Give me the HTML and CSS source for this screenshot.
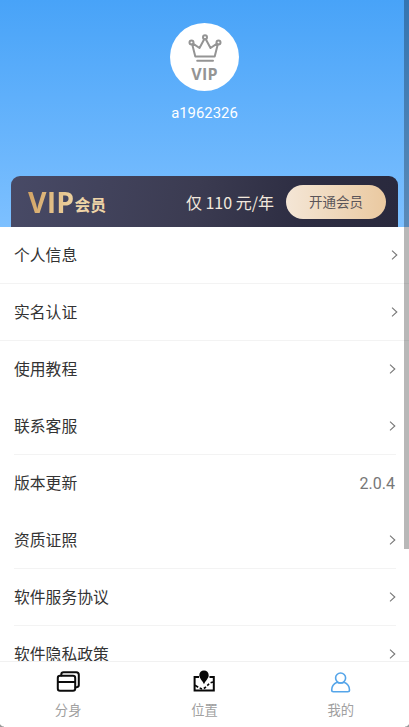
FILE: index.html
```
<!DOCTYPE html>
<html lang="zh-CN">
<head>
<meta charset="utf-8">
<title>我的</title>
<link rel="stylesheet" href="styles.css">
</head>
<body>
<div class="app">
  <main class="content">
    <header class="hero">
      <div class="avatar">
        <svg class="crown" width="34" height="29" viewBox="0 0 34 29" fill="none" stroke="#949494" stroke-width="2" stroke-linejoin="round" stroke-linecap="round">
          <path d="M4.2 10.2 7.3 22.6H26.7L29.8 10.2M5 9.7 11.5 14 16.2 5.2M17.8 5.2 22.5 14 29 9.7M9.2 26.8H25"/>
          <circle cx="17" cy="3.3" r="2"/><circle cx="3.5" cy="8.5" r="2"/><circle cx="30.5" cy="8.5" r="2"/>
        </svg>
        <span class="avatar-label">VIP</span>
      </div>
      <div class="username">a1962326</div>
      <section class="vip-card">
        <div class="vip-title"><span class="vip-word">VIP</span><span class="vip-member">会员</span></div>
        <span class="price">仅 110 元/年</span>
        <button class="join">开通会员</button>
      </section>
    </header>
    <ul class="menu">
      <li class="row wide line"><span class="label">个人信息</span><svg class="chevron" viewBox="0 0 7 10"><path d="M1 .7 5.8 5 1 9.3"/></svg></li>
      <li class="row wide line"><span class="label">实名认证</span><svg class="chevron" viewBox="0 0 7 10"><path d="M1 .7 5.8 5 1 9.3"/></svg></li>
      <li class="row"><span class="label">使用教程</span><svg class="chevron" viewBox="0 0 7 10"><path d="M1 .7 5.8 5 1 9.3"/></svg></li>
      <li class="row line"><span class="label">联系客服</span><svg class="chevron" viewBox="0 0 7 10"><path d="M1 .7 5.8 5 1 9.3"/></svg></li>
      <li class="row"><span class="label">版本更新</span><span class="version">2.0.4</span></li>
      <li class="row line"><span class="label">资质证照</span><svg class="chevron" viewBox="0 0 7 10"><path d="M1 .7 5.8 5 1 9.3"/></svg></li>
      <li class="row line"><span class="label">软件服务协议</span><svg class="chevron" viewBox="0 0 7 10"><path d="M1 .7 5.8 5 1 9.3"/></svg></li>
      <li class="row"><span class="label">软件隐私政策</span><svg class="chevron" viewBox="0 0 7 10"><path d="M1 .7 5.8 5 1 9.3"/></svg></li>
    </ul>
  </main>
  <nav class="tabs">
    <a class="tab">
      <svg width="26" height="24" viewBox="0 0 26 24" fill="none" stroke="#0c0c0c" stroke-width="2" stroke-linejoin="round" stroke-linecap="round">
        <rect x="2.8" y="5.8" width="17.4" height="14.9" rx="2.2"/><path d="M3 12H20M6.3 5.4V4.5Q6.3 2.2 8.6 2.2H21.3Q23.8 2.2 23.8 4.7V15.3Q23.8 17.3 20.6 17.4"/>
      </svg>
      <span>分身</span>
    </a>
    <a class="tab">
      <svg width="26" height="24" viewBox="0 0 26 24" fill="none" stroke="#080808" stroke-width="2">
        <path d="M8 7H3.6V20.6H22.8V7H18.5"/>
        <path d="M4 15.2 7.2 17.2M8.7 18.1 11 18.9M12.8 18.5 15 17M16.3 15.6 18.1 13.8M19.6 12.8 22 12" stroke-width="1.6"/>
        <path d="M13 .6C10.3 .6 8.3 2.6 8.3 5.2 8.3 8.5 11.6 10.6 13 14.2 14.4 10.6 17.7 8.5 17.7 5.2 17.7 2.6 15.7 .6 13 .6Z" fill="#080808" stroke="none"/>
      </svg>
      <span>位置</span>
    </a>
    <a class="tab">
      <svg width="26" height="24" viewBox="0 0 26 24" fill="none" stroke="#55a5e9" stroke-width="1.6" stroke-linejoin="round">
        <circle cx="12.6" cy="8" r="5"/><path d="M9 12.2C5.6 13.7 3.7 16.4 3.7 20Q3.7 21.7 5.4 21.7H19.8Q21.5 21.7 21.5 20C21.5 16.4 19.6 13.7 16.2 12.2M9 12.2Q12.6 13.8 16.2 12.2"/>
      </svg>
      <span>我的</span>
    </a>
  </nav>
  <div class="scrollbar"></div>
  <i class="corner left"></i><i class="corner right"></i>
</div>
</body>
</html>
```
FILE: styles.css
```
* { box-sizing: border-box; }
body {
  margin: 0;
  font-family: Roboto, "Noto Sans CJK SC", sans-serif;
  color: #333;
  background: #fff;
}
.app {
  position: relative;
  display: flex;
  flex-direction: column;
  height: 727px;
  overflow: hidden;
}
.content { flex: 1; min-height: 0; overflow: hidden; }
.hero {
  display: flex;
  flex-direction: column;
  align-items: center;
  height: 227px;
  padding: 23px 11px 0;
  background: linear-gradient(#48a3f8, #7dc0ff);
}
.avatar {
  display: flex;
  flex-direction: column;
  align-items: center;
  width: 69px;
  height: 68px;
  padding-top: 11px;
  border-radius: 50%;
  background: #fff;
}
.crown { flex: none; }
.avatar-label {
  margin-top: 1px;
  font: 700 16px/20px "Open Sans", sans-serif;
  letter-spacing: .2px;
  color: #949494;
}
.username {
  margin-top: 13px;
  font-size: 14.9px;
  line-height: 18px;
  color: #fff;
}
.vip-card {
  display: flex;
  align-items: center;
  align-self: stretch;
  height: 51px;
  margin-top: auto;
  padding: 0 12px 0 17px;
  border-radius: 9px 9px 0 0;
  background: linear-gradient(100deg, #484a66, #3b3b51 48%, #2d2d42 75%, #29293d);
}
.vip-title { display: flex; align-items: flex-start; margin-right: auto; font-weight: 700; line-height: 34px; }
.vip-word {
  font-family: "Open Sans", sans-serif;
  font-size: 28.5px;
  letter-spacing: .2px;
  color: transparent;
  background: linear-gradient(100deg, #d1a262, #f0d6a5);
  background-clip: text;
}
.vip-member { padding-top: 11px; font-size: 15.8px; line-height: 20px; color: #efd4a7; }
.price {
  font: 16px/24px "Noto Sans CJK SC", sans-serif;
  color: #f2e8dd;
}
.join {
  width: 100px;
  height: 34px;
  margin-left: 12px;
  padding: 0 0 1px;
  border: 0;
  border-radius: 17px;
  font: 13.5px/33px "Noto Sans CJK SC", sans-serif;
  color: #5b5559;
  background: linear-gradient(90deg, #f4e6d6, #eac9a0);
}
.menu { margin: 0; padding: 0; list-style: none; }
.row {
  display: flex;
  align-items: center;
  justify-content: space-between;
  height: 57px;
  margin: 0 13px 0 14px;
  border-bottom: 1px solid transparent;
  font-size: 15.8px;
}
.wide { margin: 0; padding: 0 11px 0 14px; }
.line { border-bottom-color: #f3f3f3; }
.label { line-height: 24px; padding-top: 2px; }
.chevron { width: 7px; height: 10px; fill: none; stroke: #777; stroke-width: 1.1; }
.version { margin: 1px 1px 0 0; font-size: 16px; color: #777; }
.tabs {
  display: flex;
  flex: none;
  height: 66px;
  border-top: 1px solid #f1f1f1;
  background: #fff;
}
.tab {
  flex: 1;
  display: flex;
  flex-direction: column;
  align-items: center;
  padding-top: 8px;
  font-size: 13.3px;
  line-height: 18px;
  color: #a0a0a0;
}
.tab span { margin-top: 8px; }
.scrollbar {
  position: absolute;
  top: 0;
  right: 0;
  width: 5px;
  height: 549px;
  background: rgba(0, 0, 0, .28);
}
.corner { position: absolute; bottom: 0; width: 4px; height: 5px; }
.left { left: 0; background: radial-gradient(circle at 100% 0, transparent 4px, #999 5px); }
.right { right: 0; background: radial-gradient(circle at 0 0, transparent 4px, #999 5px); }
```
